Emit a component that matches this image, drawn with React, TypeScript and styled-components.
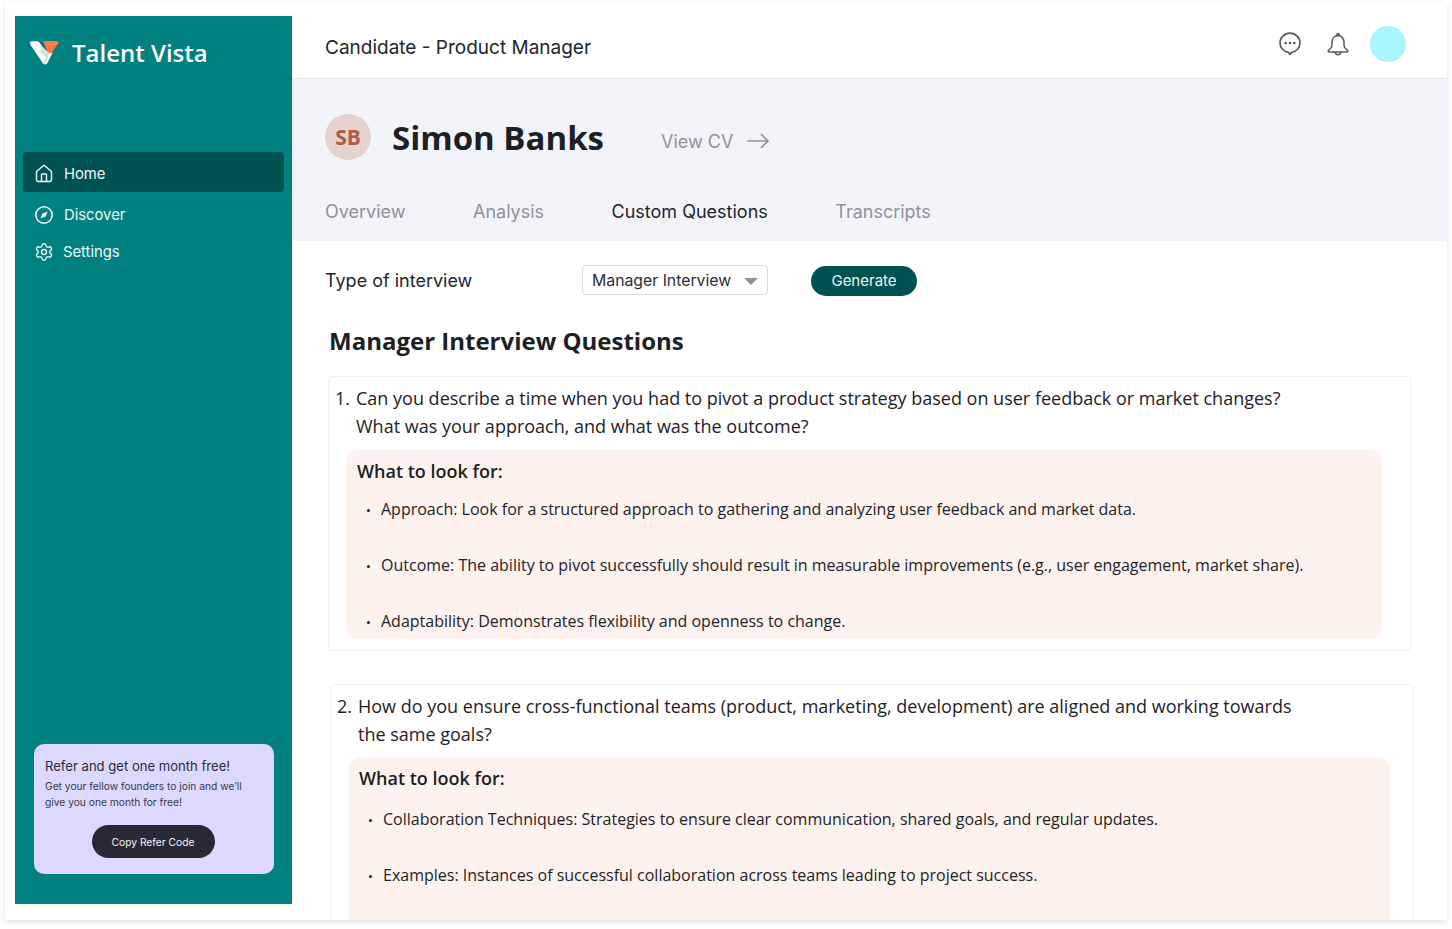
import React from "react";
import styled, { createGlobalStyle } from "styled-components";
import { Home, Settings } from "lucide-react";

const Global = createGlobalStyle`
  html, body { margin: 0; padding: 0; background: #fff; height: 100%; overflow: hidden; }
  * { box-sizing: border-box; }
  body { font-family: Inter, "Liberation Sans", sans-serif; }
`;

const Frame = styled.div`
  margin: 3px 0 0 5px;
  width: 1442px;
  height: 917px;
  background: #fff;
  box-shadow: 0 2px 6px rgba(0, 0, 0, 0.12);
  display: flex;
  overflow: hidden;
`;

const SidebarSlot = styled.div`
  flex: 0 0 287px;
  padding: 13px 0 16px 10px;
`;

const Sidebar = styled.aside`
  height: 888px;
  background: #008080;
  display: flex;
  flex-direction: column;
  padding: 0 8px;
`;

const Brand = styled.div`
  display: flex;
  align-items: center;
  gap: 11px;
  height: 76px;
  padding: 0 0 2px 6px;
  margin-bottom: 60px;
`;

const BrandName = styled.div`
  font-family: "Open Sans", sans-serif;
  font-size: 24px;
  font-weight: 600;
  color: #fff;
  margin: 0 0 1px 1px;
`;

const NavList = styled.nav`
  display: flex;
  flex-direction: column;
`;

const NavItem = styled.div<{ $active?: boolean; $h: number; $gap: number; $top?: number }>`
  display: flex;
  align-items: center;
  gap: ${(p) => p.$gap}px;
  height: ${(p) => p.$h}px;
  padding: ${(p) => p.$top ?? 0}px 0 0 11px;
  border-radius: 4px;
  background: ${(p) => (p.$active ? "#005252" : "transparent")};
  color: #eef8f8;
  font-size: 14.8px;
`;

const ReferCard = styled.div`
  margin: auto 10px 30px 11px;
  height: 130px;
  border-radius: 10px;
  background: #dcd8ff;
  padding: 14px 11px 0;
  color: #2b2a38;
  display: flex;
  flex-direction: column;
`;

const ReferTitle = styled.div`
  font-size: 13.08px;
  line-height: 17px;
`;

const ReferText = styled.div`
  margin-top: 3px;
  font-size: 10.24px;
  line-height: 16px;
  color: #3a3948;
  white-space: nowrap;
`;

const ReferButton = styled.button`
  align-self: center;
  margin: 15px 0 0 -2px;
  width: 123px;
  height: 33px;
  border: 0;
  padding: 0;
  border-radius: 17px;
  background: #292935;
  color: #f4f4f8;
  font: 400 10.25px Inter, sans-serif;
`;

const Main = styled.main`
  flex: 1;
  min-width: 0;
  display: flex;
  flex-direction: column;
`;

const Header = styled.header`
  height: 76px;
  flex: none;
  border-bottom: 1px solid #e6e7ea;
  display: flex;
  align-items: center;
  padding: 6px 41px 0 33px;
  justify-content: space-between;
`;

const PageTitle = styled.div`
  font-size: 19px;
  color: #22252b;
  padding-top: 8px;
`;

const HeaderIcons = styled.div`
  display: flex;
  align-items: center;
`;

const IconSlot = styled.div<{ $w: number }>`
  width: ${(p) => p.$w}px;
  display: flex;
  color: #565a64;
`;

const UserDot = styled.div`
  width: 36px;
  height: 36px;
  border-radius: 50%;
  background: #a8f6ff;
`;

const Hero = styled.section`
  height: 162px;
  flex: none;
  background: #f3f4f9;
  padding: 35px 0 0 33px;
`;

const PersonRow = styled.div`
  display: flex;
  align-items: center;
  height: 46px;
`;

const Initials = styled.div`
  width: 46px;
  height: 46px;
  border-radius: 50%;
  background: #e4d3cf;
  color: #b05a48;
  font: 700 21px "Open Sans", sans-serif;
  display: flex;
  align-items: center;
  justify-content: center;
`;

const PersonName = styled.h1`
  margin: 0 0 0 21px;
  font: 700 33px "Open Sans", sans-serif;
  color: #1c1f24;
`;

const ViewCv = styled.div`
  margin: 8px 0 0 57px;
  display: flex;
  align-items: center;
  gap: 14px;
  font-size: 18px;
  color: #8e929c;
`;

const Tabs = styled.div`
  margin-top: 41px;
  display: flex;
  gap: 67.5px;
`;

const Tab = styled.div<{ $active?: boolean }>`
  font-size: 18px;
  line-height: 22px;
  color: ${(p) => (p.$active ? "#22252b" : "#8e929c")};
`;

const Content = styled.section`
  flex: 1;
  min-height: 0;
  padding: 23px 0 0 33px;
`;

const FormRow = styled.div`
  display: flex;
  align-items: center;
  height: 32px;
`;

const FormLabel = styled.div`
  width: 257px;
  font-size: 18px;
  color: #22252b;
`;

const SelectBox = styled.div`
  width: 186px;
  height: 30px;
  border: 1px solid #d9dbdf;
  border-radius: 4px;
  display: flex;
  align-items: center;
  justify-content: space-between;
  padding: 0 9px;
  font-size: 15.8px;
  color: #2b2e34;
`;

const Caret = styled.span`
  width: 0;
  height: 0;
  border-left: 7px solid transparent;
  border-right: 7px solid transparent;
  border-top: 7px solid #8e929c;
  margin-top: 2px;
`;

const GenerateButton = styled.button`
  margin: 2px 0 0 43px;
  width: 106px;
  height: 30px;
  border: 0;
  padding: 0 0 1px;
  border-radius: 15px;
  background: #005252;
  color: #eaf6f6;
  font: 400 15px Inter, sans-serif;
`;

const SectionTitle = styled.h2`
  margin: 27px 0 17px 4px;
  font: 700 24px/36px "Open Sans", sans-serif;
  color: #1c1f24;
`;

const QuestionCard = styled.article<{ $offset: number; $h: number; $mb: number }>`
  margin: 0 0 ${(p) => p.$mb}px ${(p) => p.$offset}px;
  width: 1083px;
  height: ${(p) => p.$h}px;
  border: 1px solid #f1f1f3;
  border-radius: 4px;
  padding: 7px 0 0 6px;
`;

const QuestionText = styled.div`
  display: flex;
  font: 400 18px/28px "Open Sans", sans-serif;
  color: #1f2227;
`;

const QuestionNumber = styled.span`
  flex: 0 0 21px;
`;

const QuestionBody = styled.span`
  width: 960px;
`;

const LookPanel = styled.div<{ $w: number; $h: number; $mt: number; $ml: number; $pl: number }>`
  margin: ${(p) => p.$mt}px 0 0 ${(p) => p.$ml}px;
  width: ${(p) => p.$w}px;
  height: ${(p) => p.$h}px;
  background: #fdf2ee;
  border-radius: 12px;
  padding: 7px 0 0 ${(p) => p.$pl}px;
  overflow: hidden;
`;

const LookTitle = styled.div`
  font: 600 18px/28px "Open Sans", sans-serif;
  color: #1c1f24;
`;

const LookList = styled.ul<{ $gap: number; $mt: number }>`
  margin: ${(p) => p.$mt}px 0 0;
  padding: 0 0 0 10px;
  list-style: none;
  display: flex;
  flex-direction: column;
  gap: ${(p) => p.$gap}px;
  font: 400 16px/24px "Open Sans", sans-serif;
  color: #1f2227;
  white-space: nowrap;
`;

const LookItem = styled.li`
  display: flex;
  align-items: center;
  &::before {
    content: "";
    flex: none;
    width: 3px;
    height: 3px;
    margin: 2px 11px 0 0;
    border-radius: 50%;
    background: #1f2227;
  }
`;

const Logo = () => (
  <svg width="31" height="26" viewBox="0 0 31 27">
    <path d="M1.8 1.2 H8 Q9.6 1.2 10.6 3 L14 8 L20 13 L24 13 L18.5 24 Q16.5 26.8 13.8 24.2 L0.8 5 Q-0.3 1.6 1.8 1.2Z" fill="#fff" />
    <path d="M10 12 L14 7 L20 15 L16 25 Q15 25.5 14 24.5 L17 18Z" fill="#d5dcdc" />
    <path d="M14 1 H28.5 Q30.5 1.2 30 3.5 L22.5 13.5 Q21 15 19.5 13.5 Z" fill="#ff7a45" />
  </svg>
);

const CompassIcon = () => (
  <svg width="20" height="20" viewBox="0 0 20 20" fill="none" stroke="currentColor" strokeWidth="1.6">
    <circle cx="10" cy="10" r="8.2" />
    <path d="M13.6 6.4 L11.6 11.6 L6.4 13.6 L8.4 8.4Z" fill="currentColor" stroke="none" />
  </svg>
);

const ChatIcon = () => (
  <svg width="22" height="24" viewBox="0 0 22 24" fill="none" stroke="currentColor" strokeWidth="1.7" strokeLinejoin="round">
    <path d="M11 1.2 C5.4 1.2 1 5.5 1 10.9 C1 15.9 4.8 19.7 9.3 20.4 L11 22.4 L12.7 20.4 C17.2 19.7 21 15.9 21 10.9 C21 5.5 16.6 1.2 11 1.2Z" />
    <circle cx="6.7" cy="11" r="1.3" fill="currentColor" stroke="none" />
    <circle cx="11" cy="11" r="1.3" fill="currentColor" stroke="none" />
    <circle cx="15.3" cy="11" r="1.3" fill="currentColor" stroke="none" />
  </svg>
);

const BellIcon = () => (
  <svg width="24" height="24" viewBox="0 0 24 24" fill="none" stroke="currentColor" strokeWidth="1.5" strokeLinejoin="round">
    <path d="M12 3.6 C8 3.6 6 6.8 6 10.6 L6 13.4 C6 15.6 4.6 16.6 2.6 18.2 Q1.4 19.9 3.2 19.9 H20.8 Q22.6 19.9 21.4 18.2 C19.4 16.6 18 15.6 18 13.4 V10.6 C18 6.8 16 3.6 12 3.6Z" />
    <circle cx="12" cy="2.6" r="1.2" />
    <path d="M9.3 20 a2.7 2.7 0 0 0 5.4 0" />
  </svg>
);

const ArrowIcon = () => (
  <svg width="22" height="16" viewBox="0 0 22 16" fill="none" stroke="currentColor" strokeWidth="1.7" strokeLinecap="round" strokeLinejoin="round">
    <path d="M1 8 H21 M14.5 1.5 L21 8 L14.5 14.5" />
  </svg>
);

export default function App() {
  return (
    <>
      <Global />
      <Frame>
        <SidebarSlot>
          <Sidebar>
            <Brand>
              <Logo />
              <BrandName>Talent Vista</BrandName>
            </Brand>
            <NavList>
              <NavItem $active $h={40} $gap={10} $top={3}>
                <Home size={20} strokeWidth={1.7} />
                Home
              </NavItem>
              <NavItem $h={45} $gap={10}>
                <CompassIcon />
                Discover
              </NavItem>
              <NavItem $h={29} $gap={9}>
                <Settings size={20} strokeWidth={1.6} />
                Settings
              </NavItem>
            </NavList>
            <ReferCard>
              <ReferTitle>Refer and get one month free!</ReferTitle>
              <ReferText>
                Get your fellow founders to join and we’ll
                <br />
                give you one month for free!
              </ReferText>
              <ReferButton>Copy Refer Code</ReferButton>
            </ReferCard>
          </Sidebar>
        </SidebarSlot>
        <Main>
          <Header>
            <PageTitle>Candidate - Product Manager</PageTitle>
            <HeaderIcons>
              <IconSlot $w={47}><ChatIcon /></IconSlot>
              <IconSlot $w={44}><BellIcon /></IconSlot>
              <UserDot />
            </HeaderIcons>
          </Header>
          <Hero>
            <PersonRow>
              <Initials>SB</Initials>
              <PersonName>Simon Banks</PersonName>
              <ViewCv>
                View CV
                <ArrowIcon />
              </ViewCv>
            </PersonRow>
            <Tabs>
              <Tab>Overview</Tab>
              <Tab>Analysis</Tab>
              <Tab $active>Custom Questions</Tab>
              <Tab>Transcripts</Tab>
            </Tabs>
          </Hero>
          <Content>
            <FormRow>
              <FormLabel>Type of interview</FormLabel>
              <SelectBox>
                Manager Interview
                <Caret />
              </SelectBox>
              <GenerateButton>Generate</GenerateButton>
            </FormRow>
            <SectionTitle>Manager Interview Questions</SectionTitle>
            <QuestionCard $offset={3} $h={275} $mb={33}>
              <QuestionText>
                <QuestionNumber>1.</QuestionNumber>
                <QuestionBody>
                  Can you describe a time when you had to pivot a product strategy based on user feedback or market changes? What was your approach, and what was the outcome?
                </QuestionBody>
              </QuestionText>
              <LookPanel $w={1036} $h={189} $mt={10} $ml={11} $pl={11}>
                <LookTitle>What to look for:</LookTitle>
                <LookList $gap={32} $mt={12}>
                  <LookItem>Approach: Look for a structured approach to gathering and analyzing user feedback and market data.</LookItem>
                  <LookItem>Outcome: The ability to pivot successfully should result in measurable improvements (e.g., user engagement, market share).</LookItem>
                  <LookItem>Adaptability: Demonstrates flexibility and openness to change.</LookItem>
                </LookList>
              </LookPanel>
            </QuestionCard>
            <QuestionCard $offset={5} $h={240} $mb={0}>
              <QuestionText>
                <QuestionNumber>2.</QuestionNumber>
                <QuestionBody>
                  How do you ensure cross-functional teams (product, marketing, development) are aligned and working towards the same goals?
                </QuestionBody>
              </QuestionText>
              <LookPanel $w={1041} $h={180} $mt={9} $ml={12} $pl={10}>
                <LookTitle>What to look for:</LookTitle>
                <LookList $gap={32} $mt={15}>
                  <LookItem>Collaboration Techniques: Strategies to ensure clear communication, shared goals, and regular updates.</LookItem>
                  <LookItem>Examples: Instances of successful collaboration across teams leading to project success.</LookItem>
                </LookList>
              </LookPanel>
            </QuestionCard>
          </Content>
        </Main>
      </Frame>
    </>
  );
}
